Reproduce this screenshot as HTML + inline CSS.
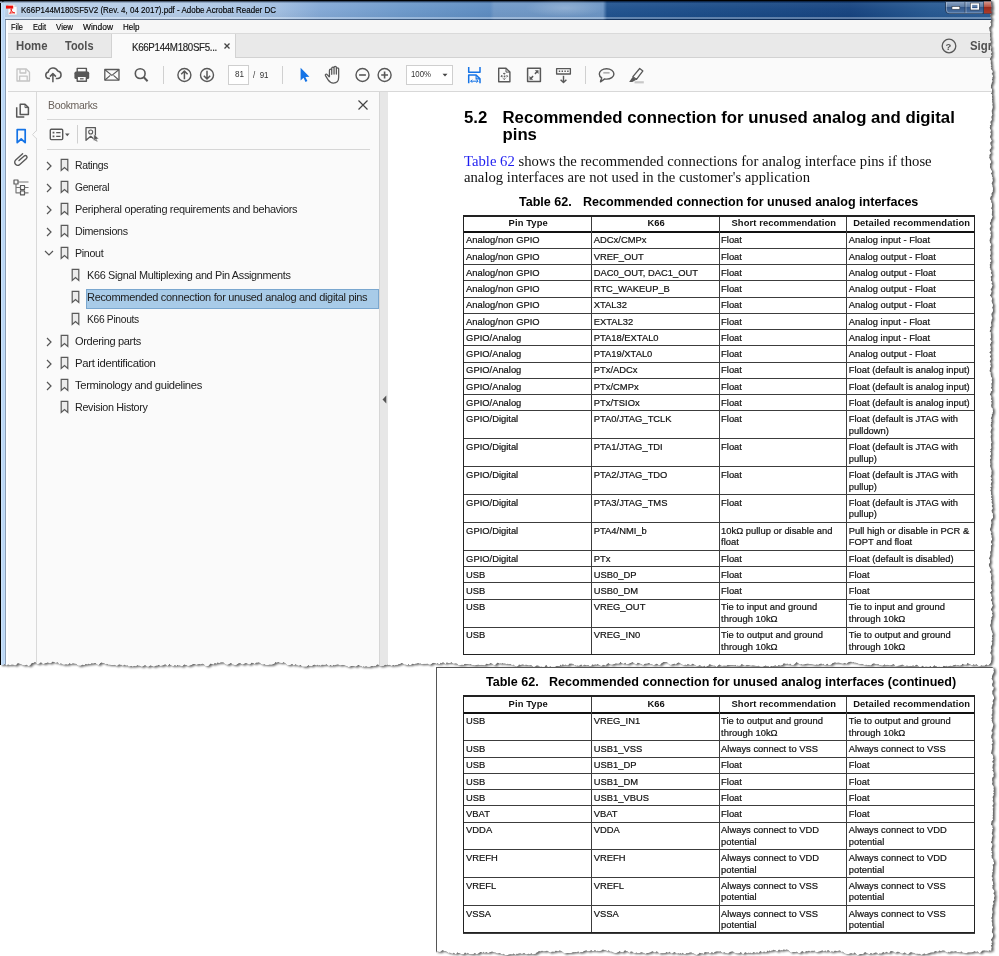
<!DOCTYPE html>
<html><head><meta charset="utf-8"><title>K66P144M180SF5V2</title>
<style>
*{box-sizing:border-box;margin:0;padding:0}
html,body{width:999px;height:956px;overflow:hidden;background:#fff;font-family:"Liberation Sans",sans-serif;}
.abs{position:absolute}
.shadow{position:absolute;left:0;top:0;filter:drop-shadow(.9px .8px .5px rgba(0,0,0,.55)) drop-shadow(2.9px 1.9px 1.3px rgba(0,0,0,.62));}
#s1{position:relative;width:999px;height:670px;overflow:hidden;background:#fff;clip-path:polygon(0.0px 0.0px,991.0px 0.0px,991.1px 2.0px,991.1px 3.8px,991.3px 5.0px,991.3px 5.9px,991.8px 7.3px,991.1px 8.1px,991.8px 8.8px,990.6px 10.3px,991.9px 12.1px,991.7px 13.6px,990.4px 14.4px,989.9px 15.7px,990.0px 16.5px,990.5px 17.2px,991.3px 18.4px,991.1px 19.7px,991.0px 20.9px,990.1px 22.1px,991.1px 24.0px,990.8px 25.7px,989.7px 26.7px,989.0px 27.7px,989.3px 29.2px,989.4px 30.9px,990.4px 32.7px,989.6px 33.4px,989.9px 35.1px,990.0px 37.0px,990.4px 37.7px,990.1px 39.3px,990.0px 40.0px,991.0px 41.9px,990.4px 42.6px,989.8px 43.4px,989.8px 45.0px,990.4px 46.3px,991.2px 47.2px,991.3px 48.0px,990.9px 48.8px,990.5px 49.6px,991.3px 51.5px,991.8px 52.5px,991.0px 53.4px,991.1px 55.1px,991.8px 55.8px,990.6px 56.7px,990.2px 58.3px,989.6px 59.3px,990.4px 60.0px,990.7px 61.0px,990.6px 62.1px,990.6px 63.9px,991.5px 65.2px,990.4px 66.1px,991.5px 67.8px,990.7px 68.8px,992.0px 70.3px,992.6px 71.2px,992.3px 72.9px,991.2px 74.1px,992.5px 74.7px,992.6px 75.7px,992.9px 76.6px,992.0px 78.0px,992.5px 78.8px,991.7px 79.5px,992.6px 80.9px,991.8px 82.3px,991.3px 84.0px,991.2px 84.7px,990.7px 85.9px,991.1px 86.7px,990.6px 88.0px,992.0px 89.1px,991.9px 91.0px,991.7px 92.5px,990.5px 93.3px,991.7px 93.9px,992.3px 95.4px,991.9px 96.1px,991.9px 97.3px,992.4px 98.3px,991.8px 99.0px,992.2px 100.6px,992.1px 102.1px,992.5px 103.7px,992.2px 104.8px,992.6px 106.6px,992.5px 107.7px,992.1px 109.4px,991.5px 110.8px,991.7px 112.2px,991.9px 112.9px,992.3px 114.8px,991.4px 116.3px,991.3px 117.8px,991.7px 119.0px,991.7px 119.7px,991.3px 120.4px,990.3px 121.6px,990.3px 123.1px,991.1px 124.5px,989.6px 125.5px,990.2px 126.5px,989.5px 127.3px,990.1px 129.1px,990.8px 130.3px,990.6px 131.3px,990.1px 132.2px,990.9px 133.8px,990.3px 135.5px,989.9px 136.9px,990.2px 137.7px,991.1px 139.4px,991.7px 140.9px,990.4px 141.9px,990.2px 143.0px,990.3px 143.9px,990.6px 145.3px,991.4px 146.4px,990.9px 148.2px,989.9px 148.9px,989.4px 150.6px,990.3px 152.2px,991.0px 153.2px,990.0px 153.8px,989.3px 155.0px,989.4px 156.7px,989.1px 157.5px,989.7px 158.9px,990.4px 160.3px,991.3px 161.9px,990.2px 163.4px,989.7px 164.6px,990.2px 165.3px,989.9px 166.8px,990.1px 167.8px,990.7px 169.3px,991.5px 170.6px,992.0px 171.8px,990.9px 173.5px,991.9px 175.3px,991.7px 176.1px,992.6px 177.5px,992.3px 178.6px,992.7px 180.3px,992.2px 182.1px,991.4px 183.6px,992.3px 185.1px,992.3px 186.5px,992.7px 187.4px,992.9px 189.3px,992.6px 190.6px,992.7px 191.6px,991.5px 193.3px,991.2px 194.0px,991.8px 195.3px,990.5px 196.6px,990.1px 198.2px,990.2px 199.8px,991.5px 200.9px,990.8px 201.7px,991.7px 202.9px,992.0px 204.6px,991.9px 206.4px,991.0px 208.2px,991.5px 209.1px,992.2px 210.1px,992.0px 211.5px,991.9px 213.2px,991.5px 214.2px,992.3px 215.9px,992.5px 216.8px,991.7px 218.6px,990.7px 220.0px,990.8px 221.3px,989.8px 222.7px,990.2px 224.5px,990.9px 225.6px,990.5px 226.9px,989.5px 228.4px,989.7px 229.7px,990.8px 231.6px,990.4px 232.5px,990.2px 233.3px,991.0px 234.9px,990.3px 236.2px,990.6px 237.0px,989.8px 238.8px,989.4px 240.4px,989.6px 241.3px,989.9px 242.8px,990.7px 243.8px,991.2px 244.6px,990.9px 245.4px,990.2px 246.3px,990.4px 247.6px,990.4px 248.7px,989.8px 250.0px,990.5px 250.9px,990.5px 252.3px,990.6px 254.0px,989.8px 255.7px,990.6px 257.2px,989.9px 259.0px,990.9px 260.0px,991.4px 260.9px,989.9px 262.6px,990.5px 263.5px,989.5px 264.5px,989.9px 266.2px,989.6px 267.8px,990.6px 268.9px,990.1px 269.5px,991.5px 271.0px,990.6px 272.9px,991.5px 274.1px,991.9px 275.4px,990.8px 276.2px,990.3px 277.0px,991.2px 278.3px,990.8px 279.6px,990.7px 280.5px,992.3px 282.2px,991.1px 284.0px,992.3px 284.7px,992.4px 285.9px,991.8px 286.9px,991.4px 288.2px,990.4px 289.5px,991.6px 291.0px,991.3px 291.9px,991.1px 293.4px,990.5px 294.3px,989.9px 295.6px,991.3px 297.3px,992.1px 298.8px,991.5px 300.2px,991.5px 301.6px,992.3px 303.5px,992.8px 304.4px,992.8px 306.0px,992.1px 307.6px,992.8px 309.4px,992.9px 310.8px,992.2px 312.4px,991.1px 314.0px,991.5px 315.0px,991.4px 315.6px,991.8px 317.1px,992.5px 318.0px,991.5px 319.4px,991.4px 320.9px,991.0px 322.2px,991.1px 324.1px,991.4px 325.6px,989.9px 327.4px,990.7px 328.8px,990.3px 329.7px,989.8px 330.4px,989.4px 331.5px,990.8px 332.5px,990.6px 333.8px,990.7px 335.6px,991.0px 337.5px,990.0px 339.1px,991.0px 340.5px,991.7px 341.2px,991.1px 342.0px,991.0px 342.8px,990.0px 344.2px,990.3px 346.0px,990.8px 347.3px,990.3px 348.4px,990.6px 349.8px,991.0px 350.8px,989.7px 351.8px,989.2px 352.7px,990.4px 353.6px,991.1px 354.7px,989.6px 356.2px,990.7px 358.1px,991.1px 358.8px,990.3px 360.0px,989.6px 361.8px,990.7px 363.1px,990.2px 364.6px,990.9px 366.5px,989.8px 367.9px,990.1px 369.3px,989.5px 370.1px,989.5px 371.4px,990.7px 372.6px,990.4px 373.8px,990.7px 375.2px,991.1px 376.8px,992.2px 378.6px,991.2px 380.2px,992.1px 380.9px,992.0px 382.5px,991.2px 383.6px,991.4px 385.1px,991.6px 386.5px,990.7px 388.0px,991.9px 389.0px,992.2px 390.7px,990.6px 391.4px,990.7px 392.4px,990.1px 393.8px,989.8px 395.1px,990.9px 395.8px,991.3px 397.1px,991.2px 398.2px,990.9px 399.1px,991.9px 400.7px,990.9px 401.4px,991.6px 403.0px,991.2px 404.6px,991.1px 405.8px,991.4px 407.4px,992.8px 408.8px,992.5px 409.9px,993.1px 411.4px,992.3px 412.6px,992.9px 413.3px,991.6px 414.1px,991.8px 415.4px,991.4px 416.9px,990.7px 418.5px,991.6px 419.3px,991.2px 420.1px,991.6px 421.6px,990.7px 422.6px,991.4px 423.7px,990.4px 424.7px,990.8px 426.3px,991.6px 428.0px,991.0px 429.8px,990.4px 431.4px,990.4px 432.4px,991.4px 434.2px,990.8px 435.2px,990.6px 436.3px,990.5px 437.4px,990.9px 438.2px,991.1px 439.9px,991.2px 441.5px,991.6px 442.4px,990.8px 444.1px,991.0px 444.8px,991.1px 446.1px,991.3px 447.9px,990.1px 449.5px,991.0px 450.8px,989.9px 451.6px,991.0px 453.1px,990.9px 453.8px,991.0px 454.6px,989.9px 456.1px,990.5px 457.0px,990.7px 458.3px,989.9px 459.4px,990.2px 461.2px,990.1px 462.5px,990.4px 464.0px,990.0px 465.8px,990.4px 467.4px,991.0px 469.1px,991.5px 470.8px,991.3px 472.6px,991.4px 473.9px,991.0px 475.5px,990.3px 476.6px,991.8px 478.2px,990.7px 479.3px,990.8px 480.2px,992.0px 481.2px,991.1px 481.9px,991.4px 482.6px,990.6px 484.2px,990.8px 484.9px,991.7px 486.3px,990.5px 487.0px,990.2px 487.8px,991.0px 488.7px,990.4px 490.1px,990.2px 491.0px,991.1px 491.8px,991.0px 492.8px,990.9px 494.5px,991.6px 495.4px,990.9px 497.2px,991.9px 498.5px,990.9px 499.7px,992.0px 500.4px,991.4px 502.0px,991.6px 503.3px,992.6px 504.3px,991.6px 505.7px,991.7px 506.4px,992.5px 507.5px,992.5px 509.0px,991.6px 509.8px,991.4px 510.8px,991.9px 512.5px,993.0px 514.0px,992.5px 514.9px,992.8px 515.7px,993.0px 516.4px,992.9px 518.0px,991.8px 518.8px,990.9px 520.3px,991.2px 521.5px,991.4px 523.3px,990.9px 525.0px,990.8px 526.6px,990.1px 528.4px,990.0px 530.1px,990.6px 531.4px,991.5px 532.2px,990.8px 533.2px,990.6px 533.9px,991.3px 535.1px,991.6px 536.2px,991.1px 537.0px,992.1px 538.2px,991.9px 539.8px,991.3px 540.5px,990.8px 542.0px,991.0px 543.3px,992.2px 544.0px,991.0px 545.6px,990.7px 547.0px,991.0px 548.1px,990.7px 549.1px,991.1px 550.2px,990.3px 551.1px,990.1px 552.7px,990.4px 554.5px,989.9px 556.0px,989.2px 557.7px,988.9px 558.5px,989.9px 559.9px,989.7px 560.8px,990.0px 562.5px,989.4px 563.2px,988.9px 564.0px,988.7px 565.1px,989.4px 566.9px,990.1px 568.2px,990.9px 569.8px,990.3px 570.9px,989.4px 572.0px,990.5px 573.1px,991.3px 575.0px,991.2px 576.4px,990.7px 577.1px,991.1px 578.1px,990.7px 578.9px,991.4px 580.2px,991.3px 581.8px,991.6px 582.6px,991.2px 584.4px,990.9px 585.5px,991.2px 586.3px,990.9px 588.1px,991.4px 589.6px,991.8px 590.5px,990.4px 591.9px,990.0px 592.7px,990.7px 594.0px,991.5px 595.0px,990.9px 596.1px,991.7px 596.9px,991.9px 597.7px,991.4px 599.0px,990.7px 600.3px,992.0px 602.1px,991.9px 603.7px,992.3px 604.5px,992.7px 605.5px,992.3px 606.4px,991.4px 608.1px,990.9px 609.4px,990.9px 610.1px,992.5px 611.9px,991.9px 613.4px,992.4px 614.8px,992.4px 615.9px,991.1px 617.6px,991.5px 618.4px,991.4px 619.2px,990.9px 620.6px,990.8px 621.8px,990.8px 623.2px,990.2px 624.6px,990.1px 626.1px,990.9px 627.9px,990.9px 629.1px,991.4px 630.5px,991.8px 632.1px,992.5px 633.3px,992.5px 635.0px,991.7px 636.1px,992.4px 637.5px,991.9px 638.7px,992.5px 639.9px,991.1px 640.9px,992.2px 642.5px,992.0px 644.0px,991.3px 645.6px,990.5px 646.9px,990.9px 647.7px,990.9px 649.0px,991.5px 649.7px,990.7px 650.9px,990.6px 652.0px,989.9px 652.9px,991.2px 654.6px,991.4px 656.1px,991.4px 657.2px,991.2px 658.1px,991.3px 659.5px,991.2px 660.2px,990.5px 663.0px,988.0px 665.4px,986.5px 664.3px,985.8px 664.4px,984.8px 665.5px,983.3px 665.5px,981.9px 665.6px,981.1px 665.1px,980.2px 666.0px,979.5px 666.1px,978.7px 665.9px,977.6px 665.0px,975.9px 663.7px,975.2px 665.3px,973.8px 663.9px,971.9px 665.4px,971.1px 664.8px,970.3px 664.2px,968.8px 663.6px,967.3px 663.0px,966.4px 664.7px,965.2px 664.4px,963.8px 664.5px,962.7px 663.4px,961.1px 665.3px,959.1px 665.5px,958.0px 664.9px,956.5px 665.4px,955.7px 664.6px,954.6px 665.0px,952.9px 665.2px,952.2px 666.1px,951.0px 665.8px,950.0px 665.5px,948.9px 666.3px,948.1px 666.1px,947.2px 666.5px,946.5px 665.6px,945.4px 666.2px,944.7px 666.0px,943.8px 665.5px,942.5px 667.0px,941.2px 667.7px,940.4px 668.0px,939.2px 666.3px,937.6px 667.4px,937.0px 666.3px,935.3px 666.0px,934.3px 665.0px,933.6px 666.1px,931.7px 667.5px,930.4px 665.7px,929.3px 666.7px,927.6px 666.7px,926.7px 666.5px,925.4px 666.5px,924.4px 667.3px,922.6px 665.6px,921.5px 666.6px,920.5px 667.1px,919.2px 666.7px,917.7px 665.2px,916.6px 664.6px,915.1px 665.4px,914.3px 666.2px,913.1px 664.9px,911.9px 666.1px,910.5px 665.7px,908.6px 666.3px,907.0px 665.2px,905.6px 665.9px,903.9px 665.4px,902.8px 664.6px,901.2px 664.8px,900.5px 665.2px,898.7px 665.6px,896.9px 666.1px,895.5px 666.1px,894.4px 664.4px,893.3px 664.1px,891.4px 665.0px,890.1px 665.3px,889.3px 665.2px,887.7px 664.8px,886.7px 664.7px,885.7px 665.3px,884.8px 664.1px,883.8px 665.1px,882.1px 665.5px,880.3px 664.9px,879.6px 664.9px,878.3px 664.1px,876.8px 664.2px,875.9px 664.1px,874.0px 663.2px,872.9px 663.5px,872.0px 663.9px,871.0px 665.3px,869.7px 665.3px,868.9px 664.7px,867.4px 665.2px,866.4px 664.5px,864.7px 665.0px,863.7px 664.4px,862.1px 663.7px,860.6px 664.0px,858.7px 663.7px,857.1px 663.0px,855.5px 662.6px,854.2px 662.5px,853.2px 661.8px,852.2px 662.6px,851.3px 661.6px,849.6px 661.8px,847.7px 662.6px,846.5px 663.7px,844.7px 662.8px,843.9px 663.2px,842.2px 663.4px,840.5px 663.0px,839.0px 662.5px,837.9px 662.6px,836.7px 662.8px,835.0px 662.3px,834.1px 662.4px,832.2px 663.2px,831.5px 664.3px,829.7px 664.9px,828.6px 664.9px,827.5px 663.5px,825.7px 664.7px,824.8px 665.3px,824.1px 664.2px,823.5px 663.4px,822.6px 664.4px,821.6px 663.5px,820.7px 663.5px,818.9px 664.2px,818.1px 664.7px,816.8px 664.3px,815.4px 664.7px,813.8px 664.4px,812.3px 664.2px,810.8px 663.9px,809.6px 664.0px,808.0px 663.5px,806.2px 663.7px,804.4px 664.3px,802.5px 664.5px,801.3px 663.9px,799.9px 664.4px,798.1px 663.1px,797.4px 662.5px,796.6px 662.1px,796.0px 662.4px,795.2px 663.6px,793.7px 664.8px,791.8px 664.9px,790.0px 663.2px,789.0px 664.7px,787.7px 663.6px,786.1px 663.8px,784.8px 663.6px,783.8px 663.0px,782.3px 665.0px,780.4px 665.6px,778.6px 664.9px,777.5px 666.1px,776.1px 666.0px,775.4px 664.9px,774.1px 665.8px,772.4px 666.3px,771.3px 665.7px,769.6px 667.0px,768.3px 665.7px,766.8px 665.9px,765.7px 665.3px,764.5px 666.0px,763.7px 666.2px,761.8px 666.8px,760.9px 666.2px,760.1px 666.8px,758.6px 665.6px,757.2px 666.1px,755.8px 665.8px,754.8px 665.5px,752.8px 665.3px,751.5px 665.5px,750.7px 665.4px,749.7px 665.2px,748.6px 665.1px,746.8px 664.8px,745.7px 665.6px,744.5px 665.5px,743.0px 664.4px,741.5px 663.9px,740.5px 665.4px,738.6px 665.7px,737.7px 665.2px,736.7px 666.0px,735.7px 664.8px,734.3px 665.3px,732.8px 665.1px,730.9px 665.0px,729.1px 664.9px,727.8px 664.7px,726.2px 665.7px,725.3px 665.5px,723.7px 665.5px,722.2px 665.8px,720.6px 665.3px,719.5px 664.3px,717.7px 665.8px,716.6px 666.9px,714.8px 665.5px,713.0px 665.5px,712.0px 665.1px,710.8px 664.4px,710.1px 664.3px,709.0px 664.3px,708.2px 666.0px,707.1px 665.9px,705.6px 666.9px,704.8px 665.6px,703.0px 666.6px,701.2px 666.0px,700.0px 664.9px,698.2px 665.7px,696.8px 666.1px,695.8px 665.6px,694.0px 664.2px,692.6px 663.6px,690.8px 664.9px,689.3px 664.4px,688.7px 664.3px,687.5px 663.9px,686.8px 665.1px,685.5px 664.6px,683.7px 665.1px,682.3px 664.4px,680.6px 663.6px,678.8px 662.3px,677.1px 663.0px,675.6px 664.4px,674.7px 663.6px,673.0px 664.1px,671.7px 664.4px,670.1px 664.8px,668.6px 663.7px,667.6px 662.6px,666.8px 662.0px,664.9px 662.0px,663.5px 662.0px,661.6px 663.1px,660.7px 664.3px,658.9px 665.3px,658.0px 664.3px,656.5px 663.6px,655.1px 664.4px,653.4px 665.0px,651.8px 664.0px,650.2px 663.9px,649.3px 662.8px,647.9px 663.2px,647.1px 663.6px,645.9px 663.4px,644.5px 663.8px,643.2px 665.1px,641.3px 663.9px,639.6px 663.3px,637.7px 662.4px,636.6px 664.1px,635.1px 664.2px,634.2px 662.9px,632.3px 662.0px,631.4px 662.5px,629.7px 663.3px,627.8px 663.9px,626.5px 664.4px,625.5px 662.6px,623.6px 663.7px,622.1px 663.3px,621.2px 662.5px,620.4px 661.8px,619.2px 663.5px,617.3px 663.4px,615.8px 663.3px,614.1px 663.9px,612.2px 664.6px,610.6px 664.4px,609.8px 664.0px,608.5px 663.1px,607.6px 663.4px,606.8px 664.1px,605.7px 665.4px,604.1px 664.9px,602.9px 664.4px,602.0px 665.7px,600.2px 665.6px,598.7px 664.4px,597.3px 663.9px,596.3px 664.8px,595.4px 664.3px,593.8px 664.8px,592.0px 664.3px,591.2px 666.0px,589.8px 666.1px,588.4px 664.9px,586.5px 665.2px,584.6px 664.4px,583.6px 665.1px,582.7px 666.1px,581.7px 664.6px,580.8px 664.4px,578.9px 665.8px,577.4px 665.3px,576.7px 666.0px,575.9px 664.8px,574.7px 665.8px,573.8px 664.3px,572.0px 663.4px,570.4px 663.4px,569.3px 663.5px,568.1px 665.3px,566.4px 665.2px,565.6px 664.2px,564.6px 665.3px,562.7px 663.9px,561.6px 665.7px,560.8px 664.3px,559.8px 665.7px,558.8px 665.9px,558.0px 665.9px,557.1px 665.7px,555.5px 666.4px,554.3px 667.1px,553.1px 667.3px,551.3px 667.6px,550.5px 666.0px,548.9px 666.9px,547.9px 667.0px,546.7px 665.2px,545.9px 664.4px,545.0px 666.4px,543.4px 667.2px,541.6px 666.4px,540.0px 666.8px,538.5px 665.5px,536.7px 665.2px,535.5px 666.3px,533.8px 667.1px,532.8px 666.2px,531.2px 665.1px,529.4px 665.2px,528.2px 665.2px,526.7px 664.8px,525.8px 664.3px,525.0px 665.5px,523.1px 664.3px,521.8px 664.6px,520.8px 664.7px,520.0px 664.9px,519.0px 664.0px,518.2px 665.7px,516.6px 666.5px,514.9px 666.1px,513.9px 664.4px,512.0px 664.9px,510.4px 663.8px,508.7px 664.2px,508.0px 663.6px,506.1px 664.3px,505.3px 663.2px,503.7px 663.4px,502.4px 663.0px,501.5px 663.6px,500.3px 663.2px,499.5px 663.6px,498.7px 662.9px,497.4px 662.5px,495.8px 664.2px,494.2px 665.4px,493.4px 664.6px,492.2px 663.5px,490.4px 662.9px,488.5px 664.3px,486.5px 663.4px,484.7px 665.2px,483.1px 665.1px,481.6px 664.8px,479.8px 664.9px,478.5px 664.5px,477.0px 664.7px,475.1px 665.3px,474.0px 665.3px,473.1px 664.7px,471.8px 665.0px,471.0px 663.7px,470.1px 664.2px,469.2px 664.3px,467.5px 663.9px,466.5px 664.1px,465.3px 663.7px,464.4px 664.1px,463.3px 665.0px,462.1px 664.6px,460.2px 665.0px,459.5px 665.1px,458.7px 665.2px,457.1px 663.4px,455.5px 663.3px,454.2px 663.4px,453.0px 663.5px,451.4px 661.9px,450.0px 662.9px,448.2px 662.9px,446.8px 662.0px,445.9px 663.4px,445.2px 664.1px,444.4px 663.1px,442.9px 661.9px,441.7px 663.2px,440.5px 662.4px,439.8px 663.9px,439.0px 663.9px,437.6px 663.1px,436.2px 663.7px,435.3px 663.0px,433.4px 662.7px,432.1px 663.2px,430.5px 664.5px,428.8px 664.6px,427.5px 663.4px,426.1px 663.7px,424.4px 663.8px,423.6px 663.8px,421.9px 664.2px,420.4px 663.3px,419.4px 663.4px,418.2px 663.1px,416.3px 663.5px,415.6px 663.4px,414.3px 664.3px,412.6px 663.4px,410.7px 664.9px,409.4px 665.0px,408.3px 663.8px,407.7px 665.3px,405.9px 664.6px,404.4px 664.4px,402.9px 663.3px,401.3px 663.0px,399.8px 663.9px,398.1px 664.3px,397.2px 665.0px,396.1px 664.7px,394.4px 665.6px,393.6px 664.7px,392.5px 665.3px,391.4px 665.7px,389.7px 664.8px,388.0px 665.0px,387.2px 664.2px,386.4px 665.2px,385.3px 664.4px,383.7px 665.8px,382.8px 665.8px,381.9px 666.0px,380.3px 666.2px,378.9px 664.8px,377.1px 664.2px,375.7px 666.1px,374.7px 665.8px,373.2px 666.2px,372.1px 665.8px,370.3px 666.5px,369.4px 666.7px,367.7px 666.7px,365.8px 665.9px,364.8px 667.0px,363.8px 665.7px,363.0px 667.0px,361.3px 665.9px,359.7px 665.4px,358.2px 664.7px,356.8px 666.1px,355.5px 666.5px,354.7px 666.2px,353.0px 665.8px,351.4px 666.1px,349.7px 666.5px,348.7px 666.9px,346.9px 666.0px,345.4px 665.5px,344.0px 665.0px,342.7px 664.7px,340.9px 665.2px,339.5px 665.2px,338.2px 664.3px,336.7px 664.6px,335.6px 664.8px,334.8px 665.3px,333.1px 664.8px,332.3px 666.0px,330.8px 665.0px,330.0px 665.1px,329.1px 666.0px,327.5px 664.9px,326.3px 664.0px,325.4px 664.7px,323.6px 664.8px,321.7px 664.4px,320.9px 665.7px,319.8px 664.9px,318.6px 665.4px,317.6px 664.4px,316.2px 665.4px,314.8px 664.6px,313.0px 664.9px,311.7px 666.2px,310.9px 665.8px,309.7px 666.0px,308.7px 665.1px,307.8px 665.4px,306.7px 666.5px,305.0px 666.4px,303.8px 666.6px,302.4px 666.5px,300.5px 664.8px,298.8px 665.8px,297.7px 664.9px,297.0px 665.8px,296.1px 664.0px,295.3px 664.3px,293.8px 665.4px,292.2px 663.7px,290.4px 664.8px,288.7px 665.2px,286.9px 664.8px,285.3px 662.9px,283.4px 661.9px,282.2px 662.9px,280.8px 662.7px,279.5px 662.5px,278.0px 661.7px,276.9px 662.8px,275.7px 661.8px,274.4px 663.5px,273.1px 663.9px,272.0px 664.6px,270.6px 664.6px,269.2px 664.6px,268.0px 664.9px,266.1px 665.0px,264.2px 663.9px,263.1px 664.6px,261.4px 664.3px,260.0px 662.8px,258.7px 662.2px,257.3px 662.5px,255.9px 662.4px,254.8px 663.9px,253.4px 663.1px,251.5px 662.5px,250.3px 663.9px,248.9px 664.4px,247.1px 663.2px,245.8px 663.1px,244.3px 663.5px,242.9px 664.5px,241.6px 664.0px,240.2px 663.1px,238.4px 663.2px,237.1px 664.3px,235.3px 665.2px,233.7px 664.4px,232.5px 664.6px,231.1px 662.7px,229.7px 663.5px,228.6px 664.2px,227.0px 664.7px,225.9px 664.3px,224.6px 663.4px,223.5px 662.3px,221.8px 662.3px,220.7px 662.3px,219.3px 662.9px,217.5px 662.2px,216.4px 663.8px,214.8px 662.7px,213.5px 664.5px,211.6px 663.8px,210.0px 663.6px,209.3px 664.9px,208.4px 665.8px,207.2px 665.9px,205.9px 666.2px,204.3px 664.6px,203.6px 663.9px,202.2px 663.6px,201.4px 664.1px,200.7px 664.2px,199.3px 664.1px,197.6px 664.3px,196.5px 664.7px,194.7px 664.1px,193.0px 664.0px,191.1px 665.1px,189.5px 665.5px,187.9px 666.1px,187.1px 665.2px,185.3px 664.8px,184.3px 664.2px,182.7px 665.7px,182.0px 666.6px,181.2px 666.1px,179.9px 665.2px,178.8px 665.4px,177.2px 664.8px,176.2px 666.3px,175.2px 664.8px,173.4px 666.1px,172.4px 665.7px,170.6px 665.0px,169.6px 663.8px,168.7px 664.8px,167.4px 665.9px,166.2px 664.9px,165.1px 664.1px,163.8px 665.1px,162.9px 665.3px,160.9px 665.7px,159.9px 665.8px,159.1px 664.5px,157.4px 665.4px,155.9px 665.5px,154.8px 666.3px,153.5px 666.6px,151.9px 665.7px,150.2px 665.3px,148.7px 666.4px,146.8px 666.5px,145.9px 665.3px,144.2px 665.3px,143.4px 665.9px,142.2px 666.6px,141.3px 666.4px,139.4px 665.5px,138.2px 665.6px,137.4px 665.1px,136.4px 665.8px,135.5px 666.3px,134.4px 665.7px,132.6px 666.5px,131.4px 665.7px,130.1px 666.2px,128.5px 666.4px,127.8px 665.2px,125.9px 665.5px,124.5px 664.5px,122.9px 665.8px,121.8px 664.9px,121.1px 664.6px,119.8px 664.7px,119.1px 663.8px,118.1px 665.2px,116.2px 665.7px,114.9px 664.7px,113.1px 665.1px,111.6px 665.1px,109.8px 664.6px,108.8px 664.8px,106.9px 663.6px,105.8px 664.4px,104.1px 663.0px,102.4px 662.8px,101.6px 662.2px,100.3px 663.0px,99.4px 664.0px,98.5px 665.0px,96.6px 664.0px,95.9px 662.9px,94.6px 663.1px,92.9px 663.4px,91.9px 662.9px,90.0px 664.2px,88.5px 663.5px,87.2px 664.5px,85.7px 663.8px,84.6px 664.9px,83.9px 664.9px,82.3px 664.6px,81.0px 665.5px,79.9px 665.5px,78.3px 665.4px,77.6px 665.3px,76.4px 663.8px,74.6px 663.4px,73.3px 663.3px,72.6px 663.2px,71.1px 664.0px,69.5px 663.1px,68.5px 664.3px,67.1px 664.6px,65.9px 663.9px,65.2px 664.6px,63.4px 664.5px,62.4px 664.2px,60.9px 663.1px,59.8px 664.1px,58.8px 663.8px,58.1px 662.2px,57.4px 662.2px,55.5px 662.8px,54.2px 662.0px,52.9px 661.5px,52.1px 661.8px,51.1px 663.1px,49.7px 663.3px,48.7px 662.8px,47.9px 662.3px,46.0px 663.1px,44.9px 663.3px,43.1px 664.0px,41.7px 662.7px,41.0px 661.9px,39.3px 663.4px,37.7px 664.0px,36.9px 663.9px,36.3px 662.6px,34.8px 662.0px,33.6px 662.7px,31.8px 663.1px,30.9px 664.1px,30.1px 665.3px,28.2px 666.1px,26.8px 664.4px,25.8px 665.0px,24.6px 665.3px,23.7px 665.2px,21.9px 664.5px,20.2px 663.8px,18.7px 663.3px,17.7px 663.1px,16.8px 664.2px,15.1px 665.4px,13.3px 664.5px,11.4px 664.5px,9.9px 665.3px,8.9px 664.5px,7.7px 664.3px,6.1px 665.4px,4.6px 663.9px,2.9px 665.0px,0.0px 665.0px);}
#sh2{left:436px;top:667px}
#s2{position:relative;width:563px;height:289px;overflow:hidden;background:#fff;clip-path:polygon(0.0px 0.0px,556.3px 0.0px,557.9px 2.0px,557.6px 3.4px,558.0px 4.3px,557.6px 5.9px,556.8px 7.2px,556.7px 7.8px,556.0px 9.2px,556.0px 10.8px,555.6px 11.7px,556.8px 13.6px,557.0px 15.3px,556.6px 16.0px,556.0px 17.2px,556.3px 19.0px,557.3px 19.9px,558.0px 20.6px,557.6px 21.8px,557.3px 22.9px,556.3px 23.7px,556.4px 25.5px,556.4px 27.1px,557.7px 28.9px,558.0px 30.5px,558.0px 31.8px,557.4px 32.6px,556.6px 34.2px,557.5px 36.0px,556.7px 37.2px,556.4px 38.4px,556.1px 40.2px,555.4px 40.9px,556.7px 42.4px,556.2px 43.6px,556.5px 45.0px,556.3px 45.9px,556.2px 47.2px,555.2px 48.0px,556.4px 49.1px,556.2px 50.2px,555.1px 51.2px,556.1px 51.9px,555.7px 53.5px,556.2px 54.9px,557.0px 56.7px,557.5px 57.8px,556.9px 59.7px,556.6px 61.4px,555.9px 62.5px,555.5px 64.2px,556.6px 64.9px,556.4px 66.5px,555.4px 68.2px,555.5px 69.1px,555.2px 70.3px,555.4px 71.0px,556.7px 72.7px,556.1px 74.3px,556.9px 75.2px,556.7px 76.5px,555.6px 77.2px,556.3px 78.8px,556.2px 80.6px,556.1px 81.7px,555.7px 83.4px,555.5px 84.7px,555.0px 86.3px,556.8px 87.8px,556.8px 88.4px,557.5px 89.9px,556.7px 91.2px,557.8px 92.3px,556.7px 94.1px,556.2px 94.8px,556.7px 95.5px,557.8px 96.3px,556.8px 97.7px,556.8px 99.0px,556.6px 100.3px,556.4px 101.1px,557.4px 102.2px,556.4px 103.5px,557.6px 105.0px,557.9px 106.6px,557.3px 107.3px,557.7px 108.0px,557.7px 108.8px,557.6px 109.8px,556.3px 110.8px,556.2px 111.9px,556.2px 113.6px,556.7px 114.9px,556.0px 116.7px,556.6px 118.1px,557.8px 119.6px,557.8px 120.6px,557.6px 121.9px,558.0px 122.6px,557.4px 124.5px,558.4px 125.5px,557.0px 126.3px,557.9px 127.0px,557.6px 128.5px,556.6px 129.9px,557.0px 131.4px,557.0px 132.6px,556.7px 133.8px,556.9px 134.5px,557.5px 135.4px,557.6px 137.0px,556.6px 138.2px,556.6px 139.3px,557.5px 140.8px,556.8px 141.5px,556.9px 142.7px,557.0px 144.5px,556.9px 145.9px,557.0px 147.3px,556.7px 148.8px,557.1px 149.8px,556.6px 150.9px,557.2px 152.5px,555.5px 154.4px,555.5px 155.4px,555.2px 156.5px,555.0px 157.8px,556.7px 158.8px,556.4px 160.4px,557.3px 161.2px,556.2px 162.7px,556.6px 163.7px,556.0px 165.2px,555.8px 167.0px,556.7px 167.9px,556.8px 168.8px,556.6px 169.6px,556.0px 170.6px,555.8px 172.4px,556.0px 173.6px,555.2px 174.5px,555.0px 175.7px,556.3px 176.5px,556.5px 177.2px,556.3px 179.0px,555.9px 179.6px,555.9px 180.3px,555.2px 181.8px,555.6px 182.4px,555.3px 183.2px,556.4px 184.4px,555.4px 185.5px,556.5px 187.1px,555.5px 188.4px,555.8px 189.2px,555.7px 190.5px,557.0px 192.2px,557.8px 193.9px,557.4px 194.6px,558.0px 195.3px,558.0px 196.9px,556.6px 197.7px,557.1px 199.4px,557.1px 200.8px,556.8px 202.4px,556.6px 203.4px,557.1px 204.4px,556.1px 206.1px,556.6px 206.8px,556.1px 208.3px,555.6px 209.2px,556.3px 209.9px,556.9px 211.4px,556.0px 212.2px,556.5px 214.0px,557.1px 215.1px,557.0px 216.7px,557.6px 217.4px,556.3px 218.3px,556.8px 219.4px,556.4px 220.8px,557.0px 222.3px,557.9px 223.1px,558.5px 224.7px,557.4px 226.2px,558.4px 227.8px,558.8px 229.1px,557.9px 230.9px,558.6px 232.7px,556.9px 234.4px,557.4px 235.4px,557.8px 236.8px,556.7px 238.2px,556.8px 240.0px,556.1px 241.8px,556.4px 243.6px,556.8px 245.2px,556.2px 247.0px,556.0px 247.7px,556.2px 248.5px,555.9px 250.2px,555.1px 251.0px,556.0px 252.1px,556.5px 252.8px,555.6px 253.7px,556.1px 255.4px,556.4px 257.2px,555.9px 258.0px,556.6px 259.1px,557.1px 260.7px,556.3px 262.1px,556.2px 263.3px,555.9px 264.5px,556.1px 265.8px,557.0px 266.5px,557.2px 267.9px,557.0px 269.4px,556.1px 271.3px,555.0px 272.4px,555.6px 273.9px,556.6px 275.2px,555.4px 276.1px,556.1px 277.6px,554.8px 278.8px,555.9px 279.9px,555.5px 281.2px,555.3px 284.0px,553.0px 283.3px,552.3px 285.1px,551.4px 283.8px,549.9px 283.8px,548.1px 283.6px,546.2px 283.8px,544.8px 285.4px,543.3px 286.2px,541.7px 284.4px,539.9px 285.0px,538.8px 284.2px,537.1px 284.9px,535.2px 285.6px,533.3px 285.4px,531.8px 285.4px,530.8px 286.3px,529.7px 286.2px,527.8px 285.8px,527.0px 286.0px,525.5px 284.5px,524.8px 284.7px,524.1px 285.7px,522.8px 285.1px,521.6px 285.2px,519.7px 284.3px,518.6px 284.6px,517.6px 284.7px,516.2px 284.4px,514.7px 284.5px,513.9px 285.7px,512.8px 284.8px,511.6px 285.7px,509.7px 285.1px,508.6px 283.8px,506.8px 283.5px,505.4px 283.9px,504.3px 284.1px,503.4px 283.4px,502.1px 285.1px,500.6px 284.5px,499.0px 283.9px,497.8px 285.6px,496.0px 285.6px,494.2px 285.8px,492.9px 286.2px,491.0px 286.9px,489.7px 287.2px,488.2px 286.5px,486.6px 287.4px,485.1px 288.1px,484.4px 287.3px,483.0px 286.7px,482.1px 287.2px,480.9px 286.5px,480.2px 287.8px,479.1px 286.4px,478.1px 286.0px,476.4px 285.7px,475.4px 285.3px,474.1px 285.4px,473.0px 286.7px,471.1px 287.5px,470.4px 286.7px,468.7px 285.4px,467.8px 286.0px,466.6px 286.8px,465.0px 286.4px,464.1px 285.7px,463.1px 284.9px,461.6px 284.7px,459.8px 285.8px,459.0px 285.9px,457.6px 284.8px,456.3px 284.3px,454.7px 283.9px,453.2px 286.2px,451.4px 285.4px,450.1px 284.8px,449.0px 286.3px,447.3px 285.0px,446.1px 285.9px,445.3px 286.8px,443.5px 286.6px,442.3px 287.3px,441.0px 286.0px,440.0px 285.4px,438.3px 286.0px,436.7px 287.1px,434.8px 286.1px,433.6px 287.3px,432.0px 286.7px,430.5px 286.0px,429.6px 285.3px,428.5px 285.5px,427.1px 287.3px,426.3px 287.1px,424.5px 287.1px,423.2px 287.5px,422.5px 288.1px,421.0px 288.0px,419.2px 286.1px,418.5px 285.4px,417.2px 286.9px,415.4px 286.2px,413.9px 286.6px,412.8px 287.3px,411.0px 286.9px,409.1px 286.7px,407.6px 285.4px,406.6px 284.6px,405.9px 285.9px,404.9px 284.2px,403.8px 283.6px,402.6px 283.8px,401.7px 284.2px,400.5px 284.0px,398.8px 283.8px,397.4px 285.0px,395.5px 284.3px,394.8px 285.4px,393.5px 284.1px,392.7px 283.6px,391.7px 283.1px,390.9px 285.0px,389.2px 283.6px,387.9px 284.8px,386.6px 283.5px,385.5px 283.7px,383.7px 284.4px,382.5px 284.8px,381.8px 285.1px,380.1px 285.3px,378.9px 284.5px,378.3px 283.6px,377.4px 284.1px,375.8px 283.8px,374.5px 284.7px,373.0px 283.7px,371.2px 284.6px,370.1px 284.1px,368.6px 285.7px,367.5px 285.0px,366.1px 284.1px,364.9px 285.6px,363.6px 286.0px,362.6px 286.2px,360.9px 284.7px,359.6px 285.1px,358.2px 285.0px,357.2px 284.9px,356.1px 285.3px,355.0px 286.0px,353.6px 284.3px,352.4px 283.3px,350.8px 282.6px,349.3px 282.9px,347.7px 282.5px,346.1px 283.8px,345.2px 282.9px,344.1px 283.7px,343.1px 282.5px,341.8px 284.0px,341.0px 284.9px,339.7px 283.5px,338.9px 283.3px,337.6px 282.8px,336.9px 283.4px,335.9px 283.5px,334.6px 284.3px,333.2px 283.5px,332.4px 284.7px,331.6px 283.5px,330.9px 284.7px,329.6px 285.6px,328.1px 284.6px,326.9px 285.2px,325.9px 285.7px,324.8px 284.1px,323.7px 284.7px,322.8px 285.9px,321.0px 285.6px,319.1px 286.0px,317.8px 284.9px,315.9px 286.4px,314.7px 285.8px,313.9px 286.1px,312.2px 285.8px,311.1px 286.2px,309.4px 285.3px,308.4px 286.1px,307.7px 286.9px,306.7px 287.3px,305.4px 285.8px,304.7px 285.0px,303.8px 286.2px,302.1px 286.5px,301.0px 286.6px,299.4px 285.9px,298.7px 285.9px,297.7px 285.1px,296.6px 284.5px,294.8px 284.7px,292.9px 285.8px,292.3px 286.8px,290.6px 286.2px,288.8px 285.8px,288.1px 284.9px,287.0px 286.2px,285.3px 284.9px,284.2px 284.3px,283.3px 284.7px,282.1px 284.4px,280.6px 284.5px,278.8px 285.1px,277.5px 286.2px,276.4px 285.4px,275.6px 285.2px,274.7px 286.2px,273.6px 286.7px,272.6px 285.3px,271.5px 285.6px,269.7px 285.3px,268.8px 285.1px,267.8px 287.0px,265.9px 286.2px,265.2px 286.5px,263.8px 285.7px,262.6px 287.1px,261.9px 287.5px,260.4px 288.0px,259.1px 287.4px,257.8px 286.4px,256.5px 286.2px,255.4px 285.6px,254.6px 285.4px,253.2px 285.7px,251.8px 286.5px,250.9px 285.9px,249.5px 287.0px,247.9px 287.0px,246.5px 285.8px,245.5px 287.1px,244.3px 285.9px,243.1px 287.1px,242.3px 285.9px,241.0px 287.1px,239.9px 286.1px,238.2px 285.1px,237.2px 285.9px,235.4px 286.8px,234.4px 285.7px,233.3px 284.8px,232.2px 285.9px,230.3px 285.1px,229.6px 285.9px,227.7px 286.3px,226.5px 286.3px,224.8px 286.3px,223.6px 286.9px,221.9px 285.3px,220.7px 284.2px,219.5px 285.5px,218.3px 285.4px,216.6px 284.2px,215.5px 284.7px,214.2px 285.5px,212.3px 286.1px,211.0px 286.1px,209.6px 286.9px,208.2px 286.3px,207.0px 285.7px,205.4px 285.3px,203.6px 286.0px,201.7px 286.3px,200.3px 285.6px,199.6px 286.0px,198.0px 286.3px,196.3px 284.7px,194.8px 284.5px,193.7px 285.9px,192.5px 285.5px,191.8px 284.6px,190.8px 284.2px,189.5px 283.6px,188.7px 283.4px,187.1px 285.4px,185.5px 285.0px,184.7px 285.5px,183.9px 284.0px,182.6px 285.1px,181.5px 285.6px,180.4px 286.0px,178.8px 285.9px,176.9px 285.6px,176.0px 284.7px,174.6px 284.8px,173.7px 284.4px,172.7px 283.2px,171.4px 284.2px,170.0px 283.5px,169.1px 283.2px,167.9px 282.9px,166.9px 282.6px,165.8px 283.6px,164.4px 283.9px,162.5px 284.2px,161.7px 283.7px,160.4px 284.4px,159.0px 283.1px,157.8px 284.0px,156.1px 283.9px,155.2px 282.9px,153.9px 284.3px,153.1px 284.3px,151.7px 284.6px,150.7px 283.5px,150.0px 283.6px,148.2px 284.1px,146.3px 285.3px,144.9px 285.0px,143.5px 285.9px,142.4px 284.6px,140.6px 285.3px,139.4px 285.0px,138.7px 285.3px,137.0px 285.3px,135.4px 285.9px,134.4px 285.9px,132.4px 286.1px,131.5px 286.0px,130.1px 286.2px,128.5px 286.7px,126.6px 285.1px,125.3px 283.9px,123.4px 283.5px,122.2px 284.6px,121.0px 283.9px,119.7px 283.8px,118.4px 284.9px,117.3px 284.7px,115.9px 284.8px,114.2px 285.8px,112.3px 284.5px,111.0px 283.7px,109.4px 284.2px,107.7px 284.6px,106.0px 283.8px,104.5px 284.4px,102.8px 284.0px,102.0px 285.3px,101.0px 285.3px,99.8px 286.7px,98.3px 287.1px,96.6px 287.4px,95.4px 286.2px,94.0px 287.2px,92.2px 286.8px,90.4px 287.4px,89.7px 287.3px,88.0px 285.9px,86.9px 286.8px,85.6px 287.0px,84.8px 286.4px,83.0px 286.4px,81.8px 287.0px,80.7px 286.8px,79.4px 287.9px,77.7px 286.6px,76.4px 287.5px,74.6px 287.3px,73.1px 287.4px,71.6px 288.1px,69.6px 288.5px,68.8px 288.0px,67.7px 286.7px,66.9px 287.6px,65.1px 287.0px,63.8px 285.9px,61.9px 286.6px,61.1px 286.5px,59.1px 285.6px,58.0px 285.5px,56.9px 284.8px,55.4px 284.7px,53.9px 285.2px,52.1px 286.2px,50.3px 285.1px,48.7px 286.2px,47.6px 284.8px,46.9px 286.0px,44.9px 284.9px,44.0px 285.2px,43.2px 286.0px,41.5px 286.9px,40.6px 287.5px,38.9px 285.9px,37.2px 287.2px,35.4px 287.3px,33.7px 286.9px,33.0px 287.0px,31.7px 285.8px,30.9px 287.1px,29.0px 285.6px,28.4px 286.5px,27.3px 287.4px,26.1px 287.3px,25.4px 287.5px,24.5px 286.7px,23.2px 286.0px,22.2px 286.0px,21.5px 285.2px,20.7px 286.6px,19.6px 287.5px,17.8px 285.8px,16.1px 286.9px,14.8px 286.1px,13.3px 285.7px,12.3px 286.1px,11.4px 285.3px,10.7px 284.8px,9.0px 284.0px,8.1px 284.2px,7.1px 283.3px,6.3px 283.3px,4.7px 284.7px,3.0px 285.0px,1.0px 283.9px,0.0px 285.5px);}
#s2 .bl{position:absolute;left:0;top:0;width:1px;height:100%;background:#555}
#s2 .bt{position:absolute;left:0;top:0;width:100%;height:1px;background:#555}

/* window chrome */
#title{position:absolute;left:0;top:0;width:999px;height:20px;
 background:linear-gradient(90deg,#bdd3eb 0,#b3cbe7 200px,#a0bde0 280px,#84a9d6 320px,#6e9acb 400px,#5d8cc1 490px,#7199c7 494px,#6c95c4 603px,#21538f 607px,#1c4d89 700px,#174480 850px,#275992 930px,#2d5f98 999px);}
#title .g{position:absolute;left:0;top:0;width:100%;height:100%;background:linear-gradient(180deg,#000 0,#000 1px,rgba(5,12,28,.6) 1.4px,rgba(10,20,40,.22) 2.4px,rgba(255,255,255,.06) 3.4px,rgba(255,255,255,.02) 9px,rgba(0,0,0,.03) 17px,rgba(255,255,255,.3) 17.5px,rgba(255,255,255,.3) 18.6px,rgba(0,10,30,.45) 19.2px,rgba(0,10,30,.45) 20px)}
#title .t{position:absolute;left:21px;top:4.2px;font-size:9.4px;line-height:11px;color:#000;white-space:nowrap;-webkit-text-stroke:.15px #000}
#lb{position:absolute;left:0;top:3px;width:8px;height:670px;background:linear-gradient(90deg,#000 0,#000 1px,#cde3f9 1.4px,#b8d5f5 3.4px,#c6dff8 4.9px,#8c9fb7 5.1px,#8c9fb7 6.2px,#fff 6.4px,#fff 8px);clip-path:polygon(0 0,5px 0,5px 17px,8px 17px,8px 670px,0 670px)}
#menu{position:absolute;left:6px;top:20px;width:993px;height:14px;background:#f6f6f6;border-bottom:1px solid #dadada}
#menu .m{position:absolute;top:1.8px;font-size:9px;line-height:11px;color:#000;white-space:nowrap;-webkit-text-stroke:.15px #000}
#tabs{position:absolute;left:6px;top:34px;width:993px;height:24px;background:#e9e9e9;border-bottom:1px solid #d2d2d2}
#tabs .ht{position:absolute;top:5px;font-size:12px;font-weight:bold;color:#505050;white-space:nowrap}
#tab{position:absolute;left:105px;top:0;width:125px;height:25px;background:#fafafa;border-left:1px solid #d2d2d2;border-right:1px solid #d2d2d2}
#tab .n{position:absolute;left:19.500px;top:7px;font-size:10.5px;color:#222;-webkit-text-stroke:.15px #222;letter-spacing:-.35px;white-space:nowrap}
#tool{position:absolute;left:6px;top:58px;width:993px;height:34px;background:#fafafa;border-bottom:1px solid #d8d8d8}
#tool svg,#strip svg,#side svg{position:absolute;overflow:visible}
.sep{position:absolute;top:8px;width:1px;height:18px;background:#d0d0d0}
.box{position:absolute;top:7px;height:20px;background:#fff;border:1px solid #cfcfcf;font-size:9.3px;color:#333}

/* left strip + sidebar */
#strip{position:absolute;margin-top:1px;left:6px;top:91px;width:31px;height:580px;background:#fafafa;border-right:1px solid #d9d9d9}
#side{position:absolute;margin-top:1px;left:37px;top:91px;width:342px;height:580px;background:#fafafa}
#split{position:absolute;margin-top:1px;left:379px;top:91px;width:9px;height:580px;background:#e7e7e7;border-left:1px solid #d6d6d6}
#doc{position:absolute;margin-top:1px;left:388px;top:91px;width:611px;height:580px;background:#fff}
.bmi{position:absolute}
.bmt{position:absolute;font-size:11px;line-height:16px;color:#222;white-space:nowrap;letter-spacing:-.33px}
.sel{position:absolute;background:#a8cbe8;border:1px solid #7aa7cf}
.hr{position:absolute;width:323px;height:1px;background:#d6d6d6}
.sx{display:inline-block;white-space:nowrap;transform-origin:0 50%}
.box .sx,.tl .sx{position:absolute}
.tl{position:absolute;font-size:9.3px;color:#333}

/* document */
.h1{position:absolute;font-size:16.75px;font-weight:bold;color:#000;line-height:17.8px;white-space:nowrap}
.body{position:absolute;font-family:"Liberation Serif",serif;font-size:14.7px;line-height:16.5px;color:#111;white-space:nowrap}
.body a{color:#1c1cf0;text-decoration:none}
.cap{position:absolute;font-size:12.55px;font-weight:bold;color:#000;white-space:nowrap}
.tb{position:absolute;font-size:9.4px;color:#111}
.tb .frame{position:absolute;left:0;top:0;width:100%;height:100%;border:1px solid #222;border-top-width:2px;border-left-width:1.5px}
.tb .th{position:absolute;height:15px;line-height:14px;text-align:center;font-weight:bold;letter-spacing:.1px}
.tb .td{position:absolute;line-height:11.5px;padding-top:2.3px;white-space:nowrap;-webkit-text-stroke:.2px #111}
.tb .hl{position:absolute;left:0;width:100%;height:1px;background:#3c3c3c}
.tb .hl.hh{height:1.5px;background:#111}
.tb .vl{position:absolute;top:0;width:1.2px;height:100%;background:#3c3c3c}
</style></head>
<body>
<div class="shadow"><div id="s1">
  <div id="title"><div class="g"></div>
    <svg class="abs" style="left:0;top:0" width="999" height="20" viewBox="0 0 999 20">
      <defs><linearGradient id="wb" x1="0" y1="0" x2="0" y2="1"><stop offset="0" stop-color="#8ea6c6"/><stop offset=".45" stop-color="#5d7da6"/><stop offset=".5" stop-color="#34588a"/><stop offset="1" stop-color="#4a73a6"/></linearGradient>
      <linearGradient id="wr" x1="0" y1="0" x2="0" y2="1"><stop offset="0" stop-color="#d69a90"/><stop offset=".45" stop-color="#b8503f"/><stop offset=".5" stop-color="#9a2a1c"/><stop offset="1" stop-color="#ac3c2a"/></linearGradient>
      <radialGradient id="gh"><stop offset="0" stop-color="#fff" stop-opacity=".22"/><stop offset="1" stop-color="#fff" stop-opacity="0"/></radialGradient></defs>
      <ellipse cx="565" cy="8" rx="40" ry="9" fill="url(#gh)"/>
      <path d="M945.500 1.500v8.500a3.500 3.500 0 0 0 3.500 3.500h50v-12z" fill="url(#wb)" stroke="#1a2c44" stroke-width="1" stroke-opacity=".7"/>
      <path d="M984 1.500h15v12h-15z" fill="url(#wr)"/>
      <path d="M965 2v11M983.500 2v11" stroke="#1a2c44" stroke-opacity=".6"/><path d="M966 2v11M946.500 2.500v7.500a3 3 0 0 0 3 3h33" stroke="#fff" stroke-opacity=".35" fill="none"/>
      <rect x="952" y="6.700" width="7.800" height="2.500" fill="#fff" stroke="#333" stroke-width=".5"/>
      <rect x="971.300" y="4" width="7" height="5" fill="none" stroke="#fff" stroke-width="1.700"/><rect x="970.300" y="3" width="9" height="7" fill="none" stroke="#333" stroke-width=".5"/>
      <!-- pdf icon -->
      <path d="M0 0h2.500v2.500a2.500 2.500 0 0 1 1.800-1.500h-4.300z" fill="#000"/>
      <path d="M8 4.300h6.400l2.700 2.700v8h-9.100z" fill="#fbfbfb" stroke="#b9c4d2" stroke-width=".7"/><path d="M14.400 4.300v2.700h2.700z" fill="#d2d6dc"/>
      <rect x="6" y="5.600" width="7.200" height="3" fill="#ee0f0a"/>
      <path d="M9.600 13.300c1.500-1.400 2.200-3.200 2-4.200-.2-.8-.9-.4-.7.600.4 1.400 1.500 2.700 3.900 3.200-1.800-.3-3.900 0-5.200.4z" fill="none" stroke="#ee0f0a" stroke-width=".9"/>
    </svg><div class="t"><span class="sx" style="transform:scaleX(0.8514)">K66P144M180SF5V2 (Rev. 4, 04 2017).pdf - Adobe Acrobat Reader DC</span></div></div>
  <div id="menu"><div class="m" style="left:5px"><span class="sx" style="transform:scaleX(0.8267)">File</span></div><div class="m" style="left:27px"><span class="sx" style="transform:scaleX(0.8379)">Edit</span></div><div class="m" style="left:50px"><span class="sx" style="transform:scaleX(0.8781)">View</span></div><div class="m" style="left:77px"><span class="sx" style="transform:scaleX(0.9370)">Window</span></div><div class="m" style="left:117px"><span class="sx" style="transform:scaleX(0.8911)">Help</span></div></div>
  <div id="tabs">
    <div class="ht" style="left:10px"><span class="sx" style="transform:scaleX(0.9447)">Home</span></div><div class="ht" style="left:59px"><span class="sx" style="transform:scaleX(0.9161)">Tools</span></div>
    <div id="tab"><div class="n"><span class="sx" style="transform:scaleX(0.9286)">K66P144M180SF5...</span></div></div>
    <div class="ht" style="left:939.500px;top:6.500px;font-size:9.500px;color:#555">?</div>
    <div class="ht" style="left:964px"><span class="sx" style="transform:scaleX(0.9500)">Sign In</span></div>
  </div>
  <div id="tool">
    <div class="sep" style="left:157px"></div><div class="sep" style="left:276px"></div><div class="sep" style="left:579px"></div>
    <div class="box" style="left:222px;width:21px"><span class="sx" style="left:5.5px;top:3.300px;transform:scaleX(0.8701)">81</span></div>
    <div class="tl" style="left:247px;top:11.500px"><span class="sx" style="transform:scaleX(0.8566)">/&nbsp; 91</span></div>
    <div class="box" style="left:400px;width:47px"><span class="sx" style="left:4px;top:3.300px;transform:scaleX(0.8410)">100%</span></div>
  </div>
  <div id="strip"></div>
  <div id="side">
    <div class="hr" style="left:10px;top:27px"></div><div class="hr" style="left:10px;top:57px"></div>
    <div class="bmt" style="left:11px;top:5px;color:#6a625c"><span class="sx" style="transform:scaleX(0.9511)">Bookmarks</span></div>
  </div>
  <svg class="bmi" style="left:45.400px;top:160.7px" width="8" height="10" viewBox="0 0 8 10"><path d="M2 1l4 4-4 4" fill="none" stroke="#555" stroke-width="1.2"/></svg>
<svg class="bmi" style="left:59.5px;top:158.0px" width="9" height="14" viewBox="0 0 9 14"><path d="M1.2 1.3h6.6v11.2l-3.3-3-3.3 3z" fill="#ececec" stroke="#5a5a5a" stroke-width="1.2"/></svg>
<div class="bmt" style="left:75.4px;top:157.4px"><span class="sx" style="transform:scaleX(0.9514)">Ratings</span></div>
<svg class="bmi" style="left:45.400px;top:182.7px" width="8" height="10" viewBox="0 0 8 10"><path d="M2 1l4 4-4 4" fill="none" stroke="#555" stroke-width="1.2"/></svg>
<svg class="bmi" style="left:59.5px;top:180.0px" width="9" height="14" viewBox="0 0 9 14"><path d="M1.2 1.3h6.6v11.2l-3.3-3-3.3 3z" fill="#ececec" stroke="#5a5a5a" stroke-width="1.2"/></svg>
<div class="bmt" style="left:75.4px;top:179.4px"><span class="sx" style="transform:scaleX(0.9286)">General</span></div>
<svg class="bmi" style="left:45.400px;top:204.7px" width="8" height="10" viewBox="0 0 8 10"><path d="M2 1l4 4-4 4" fill="none" stroke="#555" stroke-width="1.2"/></svg>
<svg class="bmi" style="left:59.5px;top:202.0px" width="9" height="14" viewBox="0 0 9 14"><path d="M1.2 1.3h6.6v11.2l-3.3-3-3.3 3z" fill="#ececec" stroke="#5a5a5a" stroke-width="1.2"/></svg>
<div class="bmt" style="left:75.4px;top:201.4px"><span class="sx" style="transform:scaleX(0.9966)">Peripheral operating requirements and behaviors</span></div>
<svg class="bmi" style="left:45.400px;top:226.7px" width="8" height="10" viewBox="0 0 8 10"><path d="M2 1l4 4-4 4" fill="none" stroke="#555" stroke-width="1.2"/></svg>
<svg class="bmi" style="left:59.5px;top:224.0px" width="9" height="14" viewBox="0 0 9 14"><path d="M1.2 1.3h6.6v11.2l-3.3-3-3.3 3z" fill="#ececec" stroke="#5a5a5a" stroke-width="1.2"/></svg>
<div class="bmt" style="left:75.4px;top:223.4px"><span class="sx" style="transform:scaleX(0.9728)">Dimensions</span></div>
<svg class="bmi" style="left:44px;top:249px" width="10" height="8" viewBox="0 0 10 8"><path d="M1 2l4 4 4-4" fill="none" stroke="#555" stroke-width="1.2"/></svg>
<svg class="bmi" style="left:59.5px;top:246.0px" width="9" height="14" viewBox="0 0 9 14"><path d="M1.2 1.3h6.6v11.2l-3.3-3-3.3 3z" fill="#ececec" stroke="#5a5a5a" stroke-width="1.2"/></svg>
<div class="bmt" style="left:75.4px;top:245.4px"><span class="sx" style="transform:scaleX(0.9686)">Pinout</span></div>
<svg class="bmi" style="left:70.5px;top:268.0px" width="9" height="14" viewBox="0 0 9 14"><path d="M1.2 1.3h6.6v11.2l-3.3-3-3.3 3z" fill="#ececec" stroke="#5a5a5a" stroke-width="1.2"/></svg>
<div class="bmt" style="left:86.5px;top:267.4px"><span class="sx" style="transform:scaleX(0.9881)">K66 Signal Multiplexing and Pin Assignments</span></div>
<div class="sel" style="left:86px;top:289px;width:292.5px;height:19.5px"></div>
<svg class="bmi" style="left:70.5px;top:290.0px" width="9" height="14" viewBox="0 0 9 14"><path d="M1.2 1.3h6.6v11.2l-3.3-3-3.3 3z" fill="#ececec" stroke="#5a5a5a" stroke-width="1.2"/></svg>
<div class="bmt" style="left:86.5px;top:289.4px"><span class="sx" style="transform:scaleX(1.0024)">Recommended connection for unused analog and digital pins</span></div>
<svg class="bmi" style="left:70.5px;top:312.0px" width="9" height="14" viewBox="0 0 9 14"><path d="M1.2 1.3h6.6v11.2l-3.3-3-3.3 3z" fill="#ececec" stroke="#5a5a5a" stroke-width="1.2"/></svg>
<div class="bmt" style="left:86.5px;top:311.4px"><span class="sx" style="transform:scaleX(0.9317)">K66 Pinouts</span></div>
<svg class="bmi" style="left:45.400px;top:336.7px" width="8" height="10" viewBox="0 0 8 10"><path d="M2 1l4 4-4 4" fill="none" stroke="#555" stroke-width="1.2"/></svg>
<svg class="bmi" style="left:59.5px;top:334.0px" width="9" height="14" viewBox="0 0 9 14"><path d="M1.2 1.3h6.6v11.2l-3.3-3-3.3 3z" fill="#ececec" stroke="#5a5a5a" stroke-width="1.2"/></svg>
<div class="bmt" style="left:75.4px;top:333.4px"><span class="sx" style="transform:scaleX(1.0030)">Ordering parts</span></div>
<svg class="bmi" style="left:45.400px;top:358.7px" width="8" height="10" viewBox="0 0 8 10"><path d="M2 1l4 4-4 4" fill="none" stroke="#555" stroke-width="1.2"/></svg>
<svg class="bmi" style="left:59.5px;top:356.0px" width="9" height="14" viewBox="0 0 9 14"><path d="M1.2 1.3h6.6v11.2l-3.3-3-3.3 3z" fill="#ececec" stroke="#5a5a5a" stroke-width="1.2"/></svg>
<div class="bmt" style="left:75.4px;top:355.4px"><span class="sx" style="transform:scaleX(1.0317)">Part identification</span></div>
<svg class="bmi" style="left:45.400px;top:380.7px" width="8" height="10" viewBox="0 0 8 10"><path d="M2 1l4 4-4 4" fill="none" stroke="#555" stroke-width="1.2"/></svg>
<svg class="bmi" style="left:59.5px;top:378.0px" width="9" height="14" viewBox="0 0 9 14"><path d="M1.2 1.3h6.6v11.2l-3.3-3-3.3 3z" fill="#ececec" stroke="#5a5a5a" stroke-width="1.2"/></svg>
<div class="bmt" style="left:75.4px;top:377.4px"><span class="sx" style="transform:scaleX(1.0174)">Terminology and guidelines</span></div>
<svg class="bmi" style="left:59.5px;top:400.0px" width="9" height="14" viewBox="0 0 9 14"><path d="M1.2 1.3h6.6v11.2l-3.3-3-3.3 3z" fill="#ececec" stroke="#5a5a5a" stroke-width="1.2"/></svg>
<div class="bmt" style="left:75.4px;top:399.4px"><span class="sx" style="transform:scaleX(0.9786)">Revision History</span></div>
  <div id="split"></div>
  <div id="doc"></div>
  <div class="h1" style="left:464px;top:108.5px">5.2</div>
  <div class="h1" style="left:502.5px;top:108.5px">Recommended connection for unused analog and digital<br>pins</div>
  <div class="body" style="left:464px;top:152.8px"><a>Table 62</a> shows the recommended connections for analog interface pins if those<br>analog interfaces are not used in the customer's application</div>
  <div class="cap" style="left:519px;top:195.3px">Table 62.</div><div class="cap" style="left:583px;top:195.3px">Recommended connection for unused analog interfaces</div>
  <div class="tb" style="left:463.0px;top:215.2px;width:511.7px;height:439.80px">
<div class="th" style="left:1.2px;top:0.9px;width:128.0px">Pin Type</div>
<div class="th" style="left:129.2px;top:0.9px;width:128.0px">K66</div>
<div class="th" style="left:257.2px;top:0.9px;width:127.2px">Short recommendation</div>
<div class="th" style="left:384.4px;top:0.9px;width:128.5px">Detailed recommendation</div>
<div class="hl hh" style="top:16.00px"></div>
<div class="td" style="left:3.1px;top:17.00px">Analog/non GPIO</div>
<div class="td" style="left:130.8px;top:17.00px">ADCx/CMPx</div>
<div class="td" style="left:258.1px;top:17.00px">Float</div>
<div class="td" style="left:385.8px;top:17.00px">Analog input - Float</div>
<div class="hl" style="top:32.75px"></div>
<div class="td" style="left:3.1px;top:33.25px">Analog/non GPIO</div>
<div class="td" style="left:130.8px;top:33.25px">VREF_OUT</div>
<div class="td" style="left:258.1px;top:33.25px">Float</div>
<div class="td" style="left:385.8px;top:33.25px">Analog output - Float</div>
<div class="hl" style="top:49.00px"></div>
<div class="td" style="left:3.1px;top:49.50px">Analog/non GPIO</div>
<div class="td" style="left:130.8px;top:49.50px">DAC0_OUT, DAC1_OUT</div>
<div class="td" style="left:258.1px;top:49.50px">Float</div>
<div class="td" style="left:385.8px;top:49.50px">Analog output - Float</div>
<div class="hl" style="top:65.25px"></div>
<div class="td" style="left:3.1px;top:65.75px">Analog/non GPIO</div>
<div class="td" style="left:130.8px;top:65.75px">RTC_WAKEUP_B</div>
<div class="td" style="left:258.1px;top:65.75px">Float</div>
<div class="td" style="left:385.8px;top:65.75px">Analog output - Float</div>
<div class="hl" style="top:81.50px"></div>
<div class="td" style="left:3.1px;top:82.00px">Analog/non GPIO</div>
<div class="td" style="left:130.8px;top:82.00px">XTAL32</div>
<div class="td" style="left:258.1px;top:82.00px">Float</div>
<div class="td" style="left:385.8px;top:82.00px">Analog output - Float</div>
<div class="hl" style="top:97.75px"></div>
<div class="td" style="left:3.1px;top:98.25px">Analog/non GPIO</div>
<div class="td" style="left:130.8px;top:98.25px">EXTAL32</div>
<div class="td" style="left:258.1px;top:98.25px">Float</div>
<div class="td" style="left:385.8px;top:98.25px">Analog input - Float</div>
<div class="hl" style="top:114.00px"></div>
<div class="td" style="left:3.1px;top:114.50px">GPIO/Analog</div>
<div class="td" style="left:130.8px;top:114.50px">PTA18/EXTAL0</div>
<div class="td" style="left:258.1px;top:114.50px">Float</div>
<div class="td" style="left:385.8px;top:114.50px">Analog input - Float</div>
<div class="hl" style="top:130.25px"></div>
<div class="td" style="left:3.1px;top:130.75px">GPIO/Analog</div>
<div class="td" style="left:130.8px;top:130.75px">PTA19/XTAL0</div>
<div class="td" style="left:258.1px;top:130.75px">Float</div>
<div class="td" style="left:385.8px;top:130.75px">Analog output - Float</div>
<div class="hl" style="top:146.50px"></div>
<div class="td" style="left:3.1px;top:147.00px">GPIO/Analog</div>
<div class="td" style="left:130.8px;top:147.00px">PTx/ADCx</div>
<div class="td" style="left:258.1px;top:147.00px">Float</div>
<div class="td" style="left:385.8px;top:147.00px">Float (default is analog input)</div>
<div class="hl" style="top:162.75px"></div>
<div class="td" style="left:3.1px;top:163.25px">GPIO/Analog</div>
<div class="td" style="left:130.8px;top:163.25px">PTx/CMPx</div>
<div class="td" style="left:258.1px;top:163.25px">Float</div>
<div class="td" style="left:385.8px;top:163.25px">Float (default is analog input)</div>
<div class="hl" style="top:179.00px"></div>
<div class="td" style="left:3.1px;top:179.50px">GPIO/Analog</div>
<div class="td" style="left:130.8px;top:179.50px">PTx/TSIOx</div>
<div class="td" style="left:258.1px;top:179.50px">Float</div>
<div class="td" style="left:385.8px;top:179.50px">Float (default is analog input)</div>
<div class="hl" style="top:195.25px"></div>
<div class="td" style="left:3.1px;top:195.75px">GPIO/Digital</div>
<div class="td" style="left:130.8px;top:195.75px">PTA0/JTAG_TCLK</div>
<div class="td" style="left:258.1px;top:195.75px">Float</div>
<div class="td" style="left:385.8px;top:195.75px">Float (default is JTAG with<br>pulldown)</div>
<div class="hl" style="top:223.15px"></div>
<div class="td" style="left:3.1px;top:223.65px">GPIO/Digital</div>
<div class="td" style="left:130.8px;top:223.65px">PTA1/JTAG_TDI</div>
<div class="td" style="left:258.1px;top:223.65px">Float</div>
<div class="td" style="left:385.8px;top:223.65px">Float (default is JTAG with<br>pullup)</div>
<div class="hl" style="top:251.05px"></div>
<div class="td" style="left:3.1px;top:251.55px">GPIO/Digital</div>
<div class="td" style="left:130.8px;top:251.55px">PTA2/JTAG_TDO</div>
<div class="td" style="left:258.1px;top:251.55px">Float</div>
<div class="td" style="left:385.8px;top:251.55px">Float (default is JTAG with<br>pullup)</div>
<div class="hl" style="top:278.95px"></div>
<div class="td" style="left:3.1px;top:279.45px">GPIO/Digital</div>
<div class="td" style="left:130.8px;top:279.45px">PTA3/JTAG_TMS</div>
<div class="td" style="left:258.1px;top:279.45px">Float</div>
<div class="td" style="left:385.8px;top:279.45px">Float (default is JTAG with<br>pullup)</div>
<div class="hl" style="top:306.85px"></div>
<div class="td" style="left:3.1px;top:307.35px">GPIO/Digital</div>
<div class="td" style="left:130.8px;top:307.35px">PTA4/NMI_b</div>
<div class="td" style="left:258.1px;top:307.35px">10k&#937; pullup or disable and<br>float</div>
<div class="td" style="left:385.8px;top:307.35px">Pull high or disable in PCR &amp;<br>FOPT and float</div>
<div class="hl" style="top:334.75px"></div>
<div class="td" style="left:3.1px;top:335.25px">GPIO/Digital</div>
<div class="td" style="left:130.8px;top:335.25px">PTx</div>
<div class="td" style="left:258.1px;top:335.25px">Float</div>
<div class="td" style="left:385.8px;top:335.25px">Float (default is disabled)</div>
<div class="hl" style="top:351.00px"></div>
<div class="td" style="left:3.1px;top:351.50px">USB</div>
<div class="td" style="left:130.8px;top:351.50px">USB0_DP</div>
<div class="td" style="left:258.1px;top:351.50px">Float</div>
<div class="td" style="left:385.8px;top:351.50px">Float</div>
<div class="hl" style="top:367.25px"></div>
<div class="td" style="left:3.1px;top:367.75px">USB</div>
<div class="td" style="left:130.8px;top:367.75px">USB0_DM</div>
<div class="td" style="left:258.1px;top:367.75px">Float</div>
<div class="td" style="left:385.8px;top:367.75px">Float</div>
<div class="hl" style="top:383.50px"></div>
<div class="td" style="left:3.1px;top:384.00px">USB</div>
<div class="td" style="left:130.8px;top:384.00px">VREG_OUT</div>
<div class="td" style="left:258.1px;top:384.00px">Tie to input and ground<br>through 10k&#937;</div>
<div class="td" style="left:385.8px;top:384.00px">Tie to input and ground<br>through 10k&#937;</div>
<div class="hl" style="top:411.40px"></div>
<div class="td" style="left:3.1px;top:411.90px">USB</div>
<div class="td" style="left:130.8px;top:411.90px">VREG_IN0</div>
<div class="td" style="left:258.1px;top:411.90px">Tie to output and ground<br>through 10k&#937;</div>
<div class="td" style="left:385.8px;top:411.90px">Tie to output and ground<br>through 10k&#937;</div>
<div class="hl" style="top:439.30px"></div>
<div class="vl" style="left:128.0px"></div>
<div class="vl" style="left:256.0px"></div>
<div class="vl" style="left:383.2px"></div>
<div class="frame"></div>
</div>
  <svg id="ico" class="abs" style="left:0;top:0" width="999" height="670" viewBox="0 0 999 670" fill="none" stroke="#585858" stroke-width="1.4" stroke-linejoin="round" stroke-linecap="butt">
<!-- save (disabled) -->
<g stroke="#c4c4c4" stroke-width="1.3"><path d="M17 69h9.3l3.2 3.2v8.8h-12.5z"/><path d="M20 69.3v3.7h5.8v-3.7"/><path d="M19.6 80.8v-4.6h7.6v4.6"/></g>
<!-- cloud upload -->
<path d="M50 78.6h-1.2a3.3 3.3 0 0 1-.5-6.5a4.9 4.9 0 0 1 9.4-1a3.8 3.8 0 0 1 .3 7.5h-2.2" stroke-width="1.5"/>
<path d="M52.9 82.2v-8.4M49.9 76.6l3-3 3 3" stroke-width="1.5"/>
<!-- printer -->
<rect x="77.2" y="68.4" width="9.2" height="4" stroke-width="1.4"/>
<rect x="74.4" y="71.6" width="14.8" height="7.4" rx="1.6" fill="#585858" stroke="none"/>
<rect x="77.2" y="76.3" width="9.2" height="5" fill="#fafafa" stroke-width="1.4"/>
<path d="M80 78.8h3.6" stroke-width="1.2"/>
<!-- mail -->
<rect x="104.8" y="69.5" width="14.2" height="10.6" stroke-width="1.3"/>
<path d="M105 69.8l6.9 5.6 6.9-5.6M105 80l5.3-4.6M118.8 80l-5.3-4.6" stroke-width="1.1"/>
<!-- search -->
<circle cx="140.2" cy="73.6" r="4.9" stroke-width="1.6"/><path d="M143.8 77.3l3.8 4" stroke-width="2"/>
<!-- up / down -->
<circle cx="184.4" cy="75" r="6.5"/><path d="M184.4 79.2v-8M181.2 74.2l3.2-3.2 3.2 3.2" stroke-width="1.5"/>
<circle cx="207" cy="75" r="6.5"/><path d="M207 70.8v8M203.8 75.8l3.2 3.2 3.2-3.2" stroke-width="1.5"/>
<!-- pointer -->
<path d="M300.6 67.8v12.6l2.9-2.7 2 4.2 1.9-.9-2-4.1 4-.2z" fill="#1473e6" stroke="none"/>
<!-- hand -->
<path transform="translate(333.5 75) scale(1.1) translate(-333.5 -75)" d="M329.8 77v-6.2a1 1 0 0 1 2.1 0v3.6-5.6a1 1 0 0 1 2.1 0v5.3-5.9a1 1 0 0 1 2.1 0v6-4.6a1 1 0 0 1 2.1 0v7.4c0 3.600-2 5.300-4.800 5.300-2.300 0-3.600-.9-4.800-2.800l-2.400-3.900c-.6-1.100.8-1.900 1.600-.9l2 2.300" stroke-width="1.15"/>
<!-- zoom out / in -->
<circle cx="362.5" cy="75" r="6.5"/><path d="M359.100 75h6.800" stroke-width="1.600"/>
<circle cx="384.600" cy="75" r="6.500"/><path d="M381.200 75h6.800M384.600 71.600v6.800" stroke-width="1.600"/>
<!-- zoom caret -->
<path d="M442.500 73.800h5l-2.500 2.800z" fill="#444" stroke="none"/>
<!-- fit width (blue) -->
<g stroke="#1473e6" stroke-width="1.500"><path d="M468.700 67v5.200h11.300v-5.200"/><path d="M468.700 83.300v-8.300h7.400l3.900 3.900v4.400"/><path d="M476.100 75v3.900h3.900" stroke-width="1.100"/><path d="M470.700 81.200h7.300M472.200 79.700l-1.500 1.500 1.500 1.500M476.500 79.700l1.500 1.500-1.500 1.500" stroke-width="1"/></g>
<!-- fit page -->
<path d="M498.700 68.200h7.300l3.900 3.900v9.600h-11.200z"/><path d="M506 68.200v3.900h3.900" stroke-width="1"/>
<path d="M504.300 73v6.400M501.100 76.200h6.400" stroke-width="1" stroke-dasharray="1.600 1.200"/>
<path d="M503.200 74l1.100-1.100 1.100 1.100M503.200 78.400l1.100 1.100 1.100-1.100M502.100 75.100l-1.100 1.100 1.100 1.100M506.500 75.100l1.100 1.100-1.100 1.100" stroke-width=".9"/>
<!-- full screen -->
<rect x="527.600" y="68.200" width="12.800" height="13.400" stroke-width="1.500"/>
<path d="M534.800 70.300h3.700v3.700zM529.500 76v3.700h3.700z" fill="#585858" stroke="none"/>
<path d="M537.500 71.300l-2.600 2.600M530.500 78.700l2.600-2.600" stroke-width="1.500"/>
<!-- keyboard / read mode -->
<rect x="556.600" y="68.600" width="13.800" height="5.400" stroke-width="1.300"/>
<path d="M558.800 71.300h1.400M561.600 71.300h1.400M564.400 71.300h1.400M567.200 71.300h1.400" stroke-width="1.400"/>
<path d="M563.500 75.800v6.600M560.600 79.700l2.900 2.900 2.900-2.900" stroke-width="1.400"/>
<!-- comment -->
<path d="M606.600 68.700c4.100 0 7.300 2.300 7.300 5.200s-3.200 5.200-7.300 5.200c-.7 0-1.300-.1-1.900-.2l-4.200 2.900 1.200-3.900c-1.500-1-2.400-2.400-2.400-4 0-2.900 3.200-5.200 7.300-5.200z" stroke-width="1.400"/>
<path d="M603.300 72.800h6.300" stroke="#b0b0b0" stroke-width="1.700"/>
<!-- highlighter pen -->
<path d="M639.700 68.500l3.200 2.400-6.400 8.500-3.600-2.700z" stroke-width="1.300"/>
<path d="M632.600 76.900l3.700 2.800-4 2.300h-3.200z" fill="#585858" stroke="none"/>
<path d="M634.500 82.300h9.300" stroke="#c8c8c8" stroke-width="2.200"/>
<!-- help -->
<circle cx="949" cy="46" r="6.800" stroke-width="1.300"/>
<!-- tab close -->
<path d="M224.500 43.500l5 5M229.500 43.500l-5 5" stroke="#444" stroke-width="1.300"/>
<!-- strip: pages -->
<path d="M16.700 107.200v9.900h7.600" stroke-width="1.500"/><path d="M20.200 104.200h4.800l3.400 3.400v6.800h-8.200z" stroke-width="1.500"/><path d="M25 104.200v3.400h3.400" stroke-width="1"/>
<!-- strip: bookmark (active) -->
<path d="M17.200 129.600h8v13l-4-3.600-4 3.600z" stroke="#1473e6" stroke-width="1.700"/>
<!-- strip: paperclip -->
<path d="M19 160.500l5.200-4.600a1.700 1.700 0 0 1 2.300 2.500l-6.700 6a3 3 0 0 1-4.100-4.500l6.900-6.200" stroke-width="1.400" stroke-linecap="round"/>
<!-- strip: tree -->
<g stroke-width="1.200"><rect x="14" y="180" width="4" height="4"/><rect x="20.500" y="185.500" width="4" height="4"/><rect x="20.500" y="190.800" width="4" height="4"/><path d="M16 184v8.800h4.500M16 187.500h4.500M18 182h10.500M24.500 187.500h4M24.500 192.800h4" stroke="#777"/></g>
<!-- strip notch -->
<path d="M37.300 130.400l-4.500 4.200 4.500 4.200z" fill="#fafafa" stroke="none"/><path d="M36.500 130.400l-4 4.200 4 4.200" stroke="#d4d4d4" stroke-width="1"/>
<!-- sidebar close -->
<path d="M358.500 100.500l9 9M367.500 100.500l-9 9" stroke="#444" stroke-width="1.200"/>
<!-- options -->
<rect x="50.300" y="129.300" width="12.400" height="10.300" rx="1" stroke-width="1.400"/>
<path d="M52.600 132.600h1.800M52.600 136.400h1.800" stroke-width="1.700"/><path d="M56.200 132.600h4.300M56.200 136.400h4.300" stroke-width="1.200"/>
<path d="M65 133.600h4.600l-2.300 2.600z" fill="#555" stroke="none"/>
<path d="M77.500 125v18.500" stroke="#d0d0d0" stroke-width="1"/>
<!-- find bookmark -->
<path d="M86 127.700h9.400v12.600l-4.700-4-4.700 4z" stroke-width="1.300"/><circle cx="90.700" cy="132" r="2" stroke-width="1.100"/>
<path d="M93.800 134.200v6.800l1.700-1.500 1.200 2.400 1.100-.5-1.200-2.400 2.300-.2z" fill="#585858" stroke="#fafafa" stroke-width=".5"/>
<!-- splitter arrow -->
<path d="M386.300 395.500v8l-3.800-4z" fill="#555" stroke="none"/>
</svg>

  <div id="lb"></div>
</div></div>
<div class="shadow" id="sh2"><div id="s2">
  <div class="cap" style="left:50px;top:8px">Table 62.</div><div class="cap" style="left:113px;top:8px">Recommended connection for unused analog interfaces (continued)</div>
  <div class="tb" style="left:27.0px;top:28.0px;width:511.7px;height:238.25px">
<div class="th" style="left:1.2px;top:1.8px;width:128.0px">Pin Type</div>
<div class="th" style="left:129.2px;top:1.8px;width:128.0px">K66</div>
<div class="th" style="left:257.2px;top:1.8px;width:127.2px">Short recommendation</div>
<div class="th" style="left:384.4px;top:1.8px;width:128.5px">Detailed recommendation</div>
<div class="hl hh" style="top:17.00px"></div>
<div class="td" style="left:3.1px;top:18.00px">USB</div>
<div class="td" style="left:130.8px;top:18.00px">VREG_IN1</div>
<div class="td" style="left:258.1px;top:18.00px">Tie to output and ground<br>through 10k&#937;</div>
<div class="td" style="left:385.8px;top:18.00px">Tie to output and ground<br>through 10k&#937;</div>
<div class="hl" style="top:45.30px"></div>
<div class="td" style="left:3.1px;top:45.80px">USB</div>
<div class="td" style="left:130.8px;top:45.80px">USB1_VSS</div>
<div class="td" style="left:258.1px;top:45.80px">Always connect to VSS</div>
<div class="td" style="left:385.8px;top:45.80px">Always connect to VSS</div>
<div class="hl" style="top:61.55px"></div>
<div class="td" style="left:3.1px;top:62.05px">USB</div>
<div class="td" style="left:130.8px;top:62.05px">USB1_DP</div>
<div class="td" style="left:258.1px;top:62.05px">Float</div>
<div class="td" style="left:385.8px;top:62.05px">Float</div>
<div class="hl" style="top:77.80px"></div>
<div class="td" style="left:3.1px;top:78.30px">USB</div>
<div class="td" style="left:130.8px;top:78.30px">USB1_DM</div>
<div class="td" style="left:258.1px;top:78.30px">Float</div>
<div class="td" style="left:385.8px;top:78.30px">Float</div>
<div class="hl" style="top:94.05px"></div>
<div class="td" style="left:3.1px;top:94.55px">USB</div>
<div class="td" style="left:130.8px;top:94.55px">USB1_VBUS</div>
<div class="td" style="left:258.1px;top:94.55px">Float</div>
<div class="td" style="left:385.8px;top:94.55px">Float</div>
<div class="hl" style="top:110.30px"></div>
<div class="td" style="left:3.1px;top:110.80px">VBAT</div>
<div class="td" style="left:130.8px;top:110.80px">VBAT</div>
<div class="td" style="left:258.1px;top:110.80px">Float</div>
<div class="td" style="left:385.8px;top:110.80px">Float</div>
<div class="hl" style="top:126.55px"></div>
<div class="td" style="left:3.1px;top:127.05px">VDDA</div>
<div class="td" style="left:130.8px;top:127.05px">VDDA</div>
<div class="td" style="left:258.1px;top:127.05px">Always connect to VDD<br>potential</div>
<div class="td" style="left:385.8px;top:127.05px">Always connect to VDD<br>potential</div>
<div class="hl" style="top:154.35px"></div>
<div class="td" style="left:3.1px;top:154.85px">VREFH</div>
<div class="td" style="left:130.8px;top:154.85px">VREFH</div>
<div class="td" style="left:258.1px;top:154.85px">Always connect to VDD<br>potential</div>
<div class="td" style="left:385.8px;top:154.85px">Always connect to VDD<br>potential</div>
<div class="hl" style="top:182.15px"></div>
<div class="td" style="left:3.1px;top:182.65px">VREFL</div>
<div class="td" style="left:130.8px;top:182.65px">VREFL</div>
<div class="td" style="left:258.1px;top:182.65px">Always connect to VSS<br>potential</div>
<div class="td" style="left:385.8px;top:182.65px">Always connect to VSS<br>potential</div>
<div class="hl" style="top:209.95px"></div>
<div class="td" style="left:3.1px;top:210.45px">VSSA</div>
<div class="td" style="left:130.8px;top:210.45px">VSSA</div>
<div class="td" style="left:258.1px;top:210.45px">Always connect to VSS<br>potential</div>
<div class="td" style="left:385.8px;top:210.45px">Always connect to VSS<br>potential</div>
<div class="hl" style="top:237.75px"></div>
<div class="vl" style="left:128.0px"></div>
<div class="vl" style="left:256.0px"></div>
<div class="vl" style="left:383.2px"></div>
<div class="frame"></div>
</div>
  <div class="bl"></div><div class="bt"></div>
</div></div>
</body></html>
